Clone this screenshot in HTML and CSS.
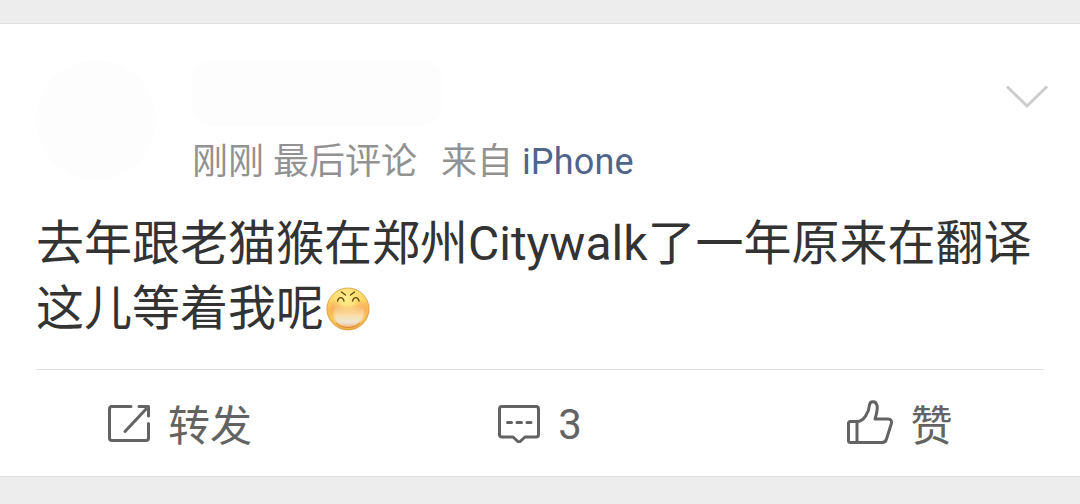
FILE: index.html
```html
<!DOCTYPE html>
<html lang="zh-CN">
<head>
    <meta charset="UTF-8">
    <meta name="viewport" content="width=device-width, initial-scale=1.0">
    <title>微博</title>
    <link rel="stylesheet" href="styles.css">
</head>
<body>
    <article class="card">
        <header class="header">
            <div class="avatar"></div>
            <div class="info">
                <div class="name"></div>
                <div class="meta">
                    <span>刚刚 最后评论</span>
                    <span class="source">来自 <a class="device">iPhone</a></span>
                </div>
            </div>
            <svg class="arrow" width="44" height="26" viewBox="0 0 44 26">
                <path d="M2 2.5L22 22L42 2.5"/>
            </svg>
        </header>

        <p class="content">去年跟老猫猴在郑州Citywalk了一年原来在翻译这儿等着我呢<svg class="emoji" width="44" height="44" viewBox="0 0 44 44">
            <defs>
                <radialGradient id="face" cx="45%" cy="25%" r="78%">
                    <stop offset="0" stop-color="#ffee90"/>
                    <stop offset=".6" stop-color="#fbd660"/>
                    <stop offset="1" stop-color="#eda63f"/>
                </radialGradient>
                <radialGradient id="blush">
                    <stop offset="0" stop-color="#f79a50" stop-opacity=".8"/>
                    <stop offset="1" stop-color="#f79a50" stop-opacity="0"/>
                </radialGradient>
                <linearGradient id="teeth" x1="0" y1="0" x2="0" y2="1">
                    <stop offset="0" stop-color="#f9c078" stop-opacity=".6"/>
                    <stop offset=".45" stop-color="#f9dca4"/>
                    <stop offset=".8" stop-color="#eee8d8"/>
                    <stop offset="1" stop-color="#f6c4b4"/>
                </linearGradient>
                <filter id="soft">
                    <feGaussianBlur stdDeviation="1.2"/>
                </filter>
            </defs>
            <circle cx="22" cy="22" r="21" fill="url(#face)" stroke="#d59a3c" stroke-width=".8"/>
            <circle cx="8" cy="22" r="10" fill="url(#blush)"/>
            <circle cx="36" cy="22" r="10" fill="url(#blush)"/>
            <path d="M8 19H38V30C35 36 29 39 22 39C15 39 9 36 8 30Z" fill="url(#teeth)" filter="url(#soft)"/>
            <path d="M10 36C17 42 27 42 34 36" fill="none" stroke="#cf7f35" stroke-width=".8"/>
            <path d="M11.500 14C12.500 9.500 17 9.500 18 14M26.500 14C27.500 9.500 32 9.500 33 14M15.500 5L19.500 8M28.500 5L24.500 8" fill="none" stroke="#6b4a12" stroke-width="1.400" stroke-linecap="round"/>
        </svg></p>

        <footer class="actions">
            <div class="action">
                <svg class="icon" width="42" height="38" viewBox="0 0 42 38">
                    <path d="M23 1.500H4Q1.500 1.500 1.500 4V33Q1.500 35.500 4 35.500H38Q40.500 35.500 40.500 33V18.500M17 26.500L39.500 2.500M31 1.500H40.500V11"/>
                </svg>
                <span class="label">转发</span>
            </div>
            <div class="action">
                <svg class="icon" width="42" height="38" viewBox="0 0 42 38">
                    <path d="M4 1.500H38Q40.500 1.500 40.500 4V29.500Q40.500 32 38 32H27L21 37.500L15 32H4Q1.500 32 1.500 29.500V4Q1.500 1.500 4 1.500Z"/>
                    <path d="M9.500 17.500H13.500M19 17.500H23.500M29 17.500H33"/>
                </svg>
                <span>3</span>
            </div>
            <div class="action">
                <svg class="icon like" width="46" height="44" viewBox="0 0 46 44">
                    <path d="M10 21.500H3.500Q1.500 21.500 1.500 23.500V40.500Q1.500 42.500 3.500 42.500H35Q38.500 42.500 39.500 39L44.200 24Q45.500 19 41 19H28C29.500 14 31 9 30 5.500C29 0.500 23 0.500 22.500 5C22 12 17 21.500 10 21.500V42.500"/>
                </svg>
                <span class="label">赞</span>
            </div>
        </footer>
    </article>
</body>
</html>
```

FILE: styles.css
```css
* {
    margin: 0;
    padding: 0;
    box-sizing: border-box;
}
body {
    padding-top: 23px;
    background: #ededed;
    font-family: Roboto, "Noto Sans CJK SC", sans-serif;
}
.card {
    height: 454px;
    padding: 0 36px;
    background: #fff;
    border-top: 1px solid #e0e0e0;
    border-bottom: 1px solid #e0e0e0;
}
.header {
    display: flex;
    height: 187px;
    padding-top: 36px;
}
.avatar {
    width: 120px;
    height: 120px;
    margin-right: 36px;
    border-radius: 50%;
    background: #fdfdfd;
}
.info {
    flex: 1;
}
.name {
    width: 250px;
    height: 66px;
    margin-bottom: 15px;
    border-radius: 20px;
    background: #fdfdfd;
}
.meta {
    display: flex;
    gap: 24px;
    font-size: 36px;
    line-height: 42px;
    color: #929292;
}
.device {
    color: #50658c;
    letter-spacing: .2px;
}
.arrow {
    margin: 24px -5px 0 0;
    fill: none;
    stroke: #ccc;
    stroke-width: 3;
}
.content {
    height: 159px;
    font-size: 48px;
    line-height: 65px;
    color: #333;
    word-break: break-all;
    border-bottom: 1px solid #e3e3e3;
}
.emoji {
    margin-left: 2px;
    vertical-align: -6px;
}
/* 底部操作栏 */
.actions {
    display: flex;
    margin: 0 -36px;
}
.action {
    display: flex;
    flex: 1;
    justify-content: center;
    padding-top: 30px;
    font-size: 42px;
    line-height: 50px;
    color: #636363;
}
.label {
    padding-top: 2px;
}
.icon {
    margin: 5px 18px 0 0;
    fill: none;
    stroke: #636363;
    stroke-width: 3;
    stroke-linecap: round;
    stroke-linejoin: round;
}
.like {
    margin: 0 17px 0 0;
}
```
